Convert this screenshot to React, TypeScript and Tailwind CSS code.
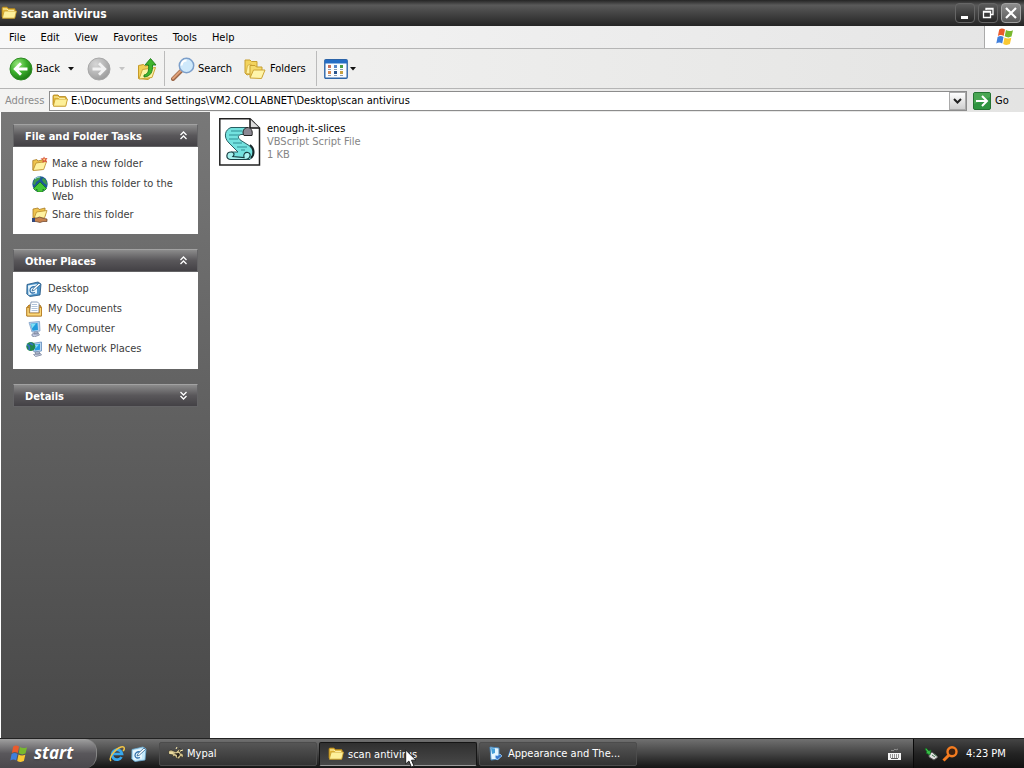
import React from 'react';

type IconProps = { className?: string };

function FolderIcon({ className = 'h-4 w-4' }: IconProps) {
  return (
    <svg viewBox="0 0 16 16" className={className} aria-hidden="true">
      <path d="M1 12V3.200C1 2.500 1.400 2 2 2h4l1.400 1.600h5.800c.6 0 1 .4 1 1V6H15L13.500 13H2Z" fill="#e3b93c" stroke="#a97c14" strokeWidth=".8" />
      <path d="M1.300 13.200 3.200 6h12.300l-1.800 7.200Z" fill="#fdf09a" stroke="#c79a26" strokeWidth=".8" />
      <path d="M2 4h4l1.200 1.400h6" stroke="#fff3b0" fill="none" />
    </svg>
  );
}

function FlagIcon({ className = 'h-5 w-5' }: IconProps) {
  return (
    <svg viewBox="0 0 20 20" className={className} aria-hidden="true">
      <path d="M4.200 2.400C6.300 1 8 1.200 10 2.500L8.700 9C6.700 7.700 5 7.700 2.900 8.900Z" fill="#ea5b2c" />
      <path d="M11 3c2 1.300 4.200 1.400 7 .2L16.500 9.600c-2.300 1.200-4.600 1-6.800-.3Z" fill="#78b82f" />
      <path d="M2.600 10C4.700 8.800 6.500 8.800 8.500 10L7.200 16.500C5.200 15.200 3.500 15.200 1.300 16.400Z" fill="#3f7fdc" />
      <path d="M9.500 10.500c2 1.200 4.300 1.300 6.800.3l-1.400 6.300c-2.300 1.200-4.600 1-6.700-.2Z" fill="#fac832" />
    </svg>
  );
}

function RoundArrow({ back, className = 'h-6 w-6' }: IconProps & { back?: boolean }) {
  const id = back ? 'arrowGreen' : 'arrowGrey';
  return (
    <svg viewBox="0 0 24 24" className={className} aria-hidden="true">
      <defs>
        <radialGradient id={id} cx=".35" cy=".28" r=".8">
          <stop offset="0" stopColor={back ? '#98e67c' : '#d6d6d6'} />
          <stop offset=".5" stopColor={back ? '#3cb02c' : '#b8b8b8'} />
          <stop offset="1" stopColor={back ? '#167210' : '#989898'} />
        </radialGradient>
      </defs>
      <circle cx="12" cy="12" r="11" fill={`url(#${id})`} stroke={back ? '#2f8a24' : '#a8a8a8'} />
      <path
        d={back ? 'M18.500 12H7M12 6.200 6.200 12l5.800 5.800' : 'M5.500 12H17M12 6.200 17.800 12 12 17.800'}
        fill="none"
        stroke={back ? '#fff' : '#f2f2f2'}
        strokeWidth="2.800"
      />
    </svg>
  );
}

function UpFolderIcon() {
  return (
    <svg viewBox="0 0 20 24" className="h-6 w-5" aria-hidden="true">
      <path d="M1.500 21.500V8.500l5-1 1.500 1.500 6-1v12l-3 2.500Z" fill="#f2cf55" stroke="#c59a28" />
      <path d="m2 22 3.500-9.500 13-2L15 20.500Z" fill="#fdf3a4" stroke="#cda536" />
      <path d="M7 18c4.500-1 5-5 4.500-10H8l5.500-6.500L19 8h-3.500c.5 7-2 11.500-8.500 12Z" fill="#3fb52e" stroke="#1d7a18" strokeWidth=".9" />
    </svg>
  );
}

function SearchIcon() {
  return (
    <svg viewBox="0 0 24 24" className="h-6 w-6" aria-hidden="true">
      <path d="m2 22 8-8" stroke="#9a6648" strokeWidth="4" strokeLinecap="round" />
      <path d="m2 21.500 8-8" stroke="#e0a078" strokeWidth="2" strokeLinecap="round" />
      <circle cx="15.500" cy="8.500" r="7.200" fill="#cfe9fb" stroke="#7c9fca" strokeWidth="1.500" />
      <path d="M10.500 8.500c.3-3 2.300-5 5-5" stroke="#fff" strokeWidth="2" fill="none" />
    </svg>
  );
}

function FoldersIcon() {
  return (
    <svg viewBox="0 0 22 22" className="h-[22px] w-[22px]" aria-hidden="true">
      <path d="M1 2h5l1.500 1.500H13V14L3 17 1 15Z" fill="#f3d35d" stroke="#c79f30" />
      <path d="m2 15.500 1.500-8L7 6v10Z" fill="#fff2a2" stroke="#d2ac42" strokeWidth=".8" />
      <path d="M6 19V7.500h5L12.500 9H18v10Z" fill="#f5da6c" stroke="#c79f30" />
      <path d="m6 20 3.500-8H21l-3.500 8.500Z" fill="#fff5aa" stroke="#cda536" />
    </svg>
  );
}

function ViewsIcon() {
  const colors = ['#c86f5b', '#5886c8', '#4b9c43', '#d78953', '#28548d', '#c7a141'];
  return (
    <svg viewBox="0 0 24 20" className="h-5 w-6" aria-hidden="true">
      <rect x=".8" y=".8" width="22.400" height="18.400" rx="1" fill="#fbfdff" stroke="#2c64a8" strokeWidth="1.400" />
      <path d="M1 1h22v3.500H1Z" fill="#246cc4" />
      {colors.map((c, i) => (
        <g key={c}>
          <rect x={4 + (i % 3) * 6} y={i < 3 ? 6 : 12} width="3" height="3" fill={c} />
          <path d={`M${4 + (i % 3) * 6} ${i < 3 ? 10.5 : 16.5}h3`} stroke="#8b9cb2" />
        </g>
      ))}
    </svg>
  );
}

function GoIcon() {
  return (
    <svg viewBox="0 0 18 18" className="h-[18px] w-[18px]" aria-hidden="true">
      <rect x=".5" y=".5" width="17" height="17" rx="1.500" fill="#2f9440" stroke="#247332" />
      <path d="M1 1h16v4L1 12Z" fill="#5ab35f" opacity=".6" />
      <path d="M3 9h11M9 4l5 5-5 5" fill="none" stroke="#fff" strokeWidth="2" />
    </svg>
  );
}

function NewFolderIcon() {
  return (
    <svg viewBox="0 0 16 16" className="h-4 w-4" aria-hidden="true">
      <path d="M.8 14V4.500l4-1 1 1.500L12 3.500v7l-2 3Z" fill="#efc44e" stroke="#a87b25" strokeWidth=".8" />
      <path d="m1 14.500 3-7.500 10.500-1.500-2.800 8Z" fill="#fff2a0" stroke="#b98c28" strokeWidth=".8" />
      <path d="m12 .5 1 1.700 2.500-.2-1.300 2 1 2.500-2.500-1L10.500 7l.2-2.800L8.500 2.500l2.700-.2Z" fill="#d8553a" />
      <circle cx="12.200" cy="3.600" r="1" fill="#ffd27a" />
    </svg>
  );
}

function PublishIcon() {
  return (
    <svg viewBox="0 0 16 16" className="h-4 w-4" aria-hidden="true">
      <circle cx="8" cy="8" r="7.700" fill="#1c5798" />
      <path d="M2 4c2-3 5-4 7-3L7 4 4 6 3 9 1 8Zm9-2c3 1 4 4 4 7l-3-2-2-3Z" fill="#3f9b4a" />
      <path d="M3 3c2-2 4-2 5-2" stroke="#a7d9f4" fill="none" />
      <path d="m8 6 6.500 6.500-2 2L11 13v3H5v-3l-1.500 1.500-2-2Z" fill="#46c738" stroke="#167a1c" strokeWidth=".8" />
    </svg>
  );
}

function ShareIcon() {
  return (
    <svg viewBox="0 0 16 16" className="h-4 w-4" aria-hidden="true">
      <path d="M1 11V2l5-1 1 1.500L13 1v8l-3 2Z" fill="#efc44e" stroke="#a87b25" strokeWidth=".8" />
      <path d="m2 11.500 2.500-6.500L15 3.500l-2.500 7.500Z" fill="#fff2a0" stroke="#b98c28" strokeWidth=".8" />
      <path d="M2 11h3l2.500-1L12 11.500l3 .5v2.500h-4l-3 1-4-1H2Z" fill="#c7834e" stroke="#684126" strokeWidth=".7" />
      <path d="M0 11h3v4H0Z" fill="#32487e" />
    </svg>
  );
}

function DesktopIcon({ light }: { light?: boolean }) {
  return (
    <svg viewBox="0 0 16 16" className="h-4 w-4" aria-hidden="true">
      <path d="M1 3.500 12 1l3 2-1 11-10 1.500L.8 13Z" fill={light ? '#c5e9fa' : '#4c93c8'} stroke={light ? '#69a9d2' : '#1f527f'} strokeWidth=".8" />
      <path d="M2 4.500 11 3v9.500L2.500 14Z" fill="#e9f7fe" />
      <path d="M9.500 6C6 5 4 7 4 9.500s2.500 3 5 2" fill="none" stroke="#3373ae" strokeWidth="1.300" />
      <path d="m6 10 1-2.500L13 2l1.500 1.500L8.500 9Z" fill="#fff" stroke="#286291" strokeWidth=".8" />
    </svg>
  );
}

function DocumentsIcon() {
  return (
    <svg viewBox="0 0 16 16" className="h-4 w-4" aria-hidden="true">
      <path d="M.8 6.500 3 4h11l1.500 2.500V15H.8Z" fill="#d99c31" stroke="#9b6717" strokeWidth=".8" />
      <path d="M3.500 12 5 1h6.500L13 2.500V12H3.500Z" fill="#fff" stroke="#7289aa" strokeWidth=".8" />
      <path d="M6 3.500h5M5.500 5.500h6M5.500 7.500h6M5.500 9.500h6" stroke="#9cb4d2" strokeWidth=".8" />
      <path d="M.8 6.500h2.500V12h10V6.500h2.200V15H.8Z" fill="#fad77b" stroke="#b57b21" strokeWidth=".8" />
    </svg>
  );
}

function ComputerIcon() {
  return (
    <svg viewBox="0 0 16 16" className="h-4 w-4" aria-hidden="true">
      <path d="M3 1.500 13.500.5 14 10l-8 1Z" fill="#b8d3ee" stroke="#7f9fc6" strokeWidth=".8" />
      <path d="m4.500 2.700 7-.7.5 7-5.500.7Z" fill="#1f9bdc" />
      <path d="m5 3 5-.4-4 5Z" fill="#7fe0f4" />
      <path d="M8 11h4v2H8Zm-2 2 6-1 1.500 2-5 1.800L6 15Z" fill="#c5cce4" stroke="#7d889e" strokeWidth=".8" />
    </svg>
  );
}

function NetworkIcon() {
  return (
    <svg viewBox="0 0 16 16" className="h-4 w-4" aria-hidden="true">
      <path d="M6 2.500 15.500 1v9l-7.500 1Z" fill="#bad6f0" stroke="#628cbb" strokeWidth=".8" />
      <path d="m7.500 3.800 6.500-1v6l-5 .8Z" fill="#269ce2" />
      <path d="m9 4 4-.6-3.500 4Z" fill="#84dcf5" />
      <circle cx="4.800" cy="5.500" r="4.500" fill="#21884c" />
      <path d="M1 4c2 0 3 2 2 5M4 2l3 2" stroke="#3271bd" strokeWidth="1.800" fill="none" />
      <path d="M9.500 11h4v2h-4Zm-2 2.500 7-1 1 1.500-6 1.500Z" fill="#cdd4e7" stroke="#7d889e" strokeWidth=".8" />
    </svg>
  );
}

function ScriptFileIcon() {
  return (
    <svg viewBox="0 0 42 48" className="h-12 w-[42px] shrink-0" aria-hidden="true">
      <path d="M.8.800H31L40.500 10v37H.8Z" fill="#fff" stroke="#222" strokeWidth="1.500" />
      <path d="M31 1v9h9.500" fill="#ddd" stroke="#111" strokeWidth="1.500" />
      <path d="M12 9.500h16c-4 3-4 5-3 7h-3c-4 1-3 4 0 6l8 5c5 4 6 9 1 14H12V34h7l-9-9c-6-6-4-13.500 2-15.500Z" fill="#74e2df" stroke="#285e62" />
      <path d="M28 9.500c-4 1-5 5-3 8h8c1-5-1-8-5-8Z" fill="#8b8792" stroke="#222" />
      <path d="M12 34c-5 0-6 7.500 0 7.500h14c5 0 7-6 3-7-3-1-5 2-4 5l-11-1c2-2 1-4.500-2-4.500Z" fill="#a8f2ef" stroke="#173e42" strokeWidth="1.200" />
      <path d="M31 27c4 3 5 9 1 13" fill="none" stroke="#15282a" strokeWidth="2" />
      <path d="M12 13h11M10 17h10M10 21h9M14 25h9M18 29h10M22 32h4" stroke="#2f8e94" />
    </svg>
  );
}

function IeIcon() {
  return (
    <svg viewBox="0 0 16 16" className="h-4 w-4" aria-hidden="true">
      <path d="M12.500 11A5 5 0 1 1 13 8H4" fill="none" stroke="#38a9ee" strokeWidth="2.700" />
      <path d="M2 15C-1 12 6 3 12 1c4-1 4 2 2 4" fill="none" stroke="#f2c445" strokeWidth="1.500" />
    </svg>
  );
}

function MypalIcon() {
  return (
    <svg viewBox="0 0 16 16" className="h-4 w-4" aria-hidden="true">
      <path d="M.5 5 3 4l2.500 1L8 6l4-4-1 3.500 3-.5-2 2c4 .5 4 3 2 5l-1-2-2 3-3-1-1-2-3 1 1-2-4-1Z" fill="#d2c28c" stroke="#1c1a15" strokeWidth=".5" />
      <path d="m6 7.500 5-.5 1 2-3 3v-3Z" fill="#29251c" />
      <path d="M1 7h4M8 3l1-2M12 5l3-1" stroke="#fff1b1" />
    </svg>
  );
}

function AppearanceIcon() {
  return (
    <svg viewBox="0 0 16 16" className="h-4 w-4" aria-hidden="true">
      <path d="m2 1 9 1v11l-8 1Z" fill="#e5f6ff" stroke="#4887bd" />
      <path d="m3 2 4 .5V7l-3 1Z" fill="#459fd9" />
      <path d="m7 11 2 3 5-4-2-2-3 2-1-1Z" fill="#3878cc" stroke="#a6d7ff" strokeWidth=".7" />
    </svg>
  );
}

function Chevrons({ down }: { down?: boolean }) {
  return (
    <svg viewBox="0 0 9 9" className="h-[9px] w-[9px]" aria-hidden="true">
      <path d={down ? 'm1.500 1 3 3 3-3m-6 4 3 3 3-3' : 'm1.500 4 3-3 3 3m-6 4 3-3 3 3'} fill="none" stroke="#fff" strokeWidth="1.300" />
    </svg>
  );
}

function Caret({ faded }: { faded?: boolean }) {
  return (
    <svg viewBox="0 0 6 4" className="h-1 w-1.5" aria-hidden="true">
      <path d="M0 0h6L3 3.500Z" fill={faded ? '#c4c4c4' : '#111'} />
    </svg>
  );
}

function CaptionButton({ label, bright, children }: { label: string; bright?: boolean; children: React.ReactNode }) {
  return (
    <button
      aria-label={label}
      className={
        bright
          ? 'flex h-5 w-5 items-center justify-center rounded-sm border border-[#a0a0a0] bg-linear-to-b from-[#8d8d8d] to-[#5a5a5a]'
          : 'flex h-5 w-5 items-center justify-center rounded-sm border border-[#666] bg-linear-to-b from-[#5c5c5c] to-[#252525]'
      }
    >
      <svg viewBox="0 0 16 16" className="h-4 w-4 shrink-0" fill="none" stroke="#fff" aria-hidden="true">
        {children}
      </svg>
    </button>
  );
}

function Panel({ title, closed, children }: { title: string; closed?: boolean; children?: React.ReactNode }) {
  return (
    <section>
      <button
        aria-expanded={!closed}
        className="flex h-[23px] w-full items-center justify-between border border-[#646466] border-t-[#a2a2a2] bg-linear-to-b from-[#8c8c8c] via-[#59575a] to-[#434145] pr-[9px] pl-[11px] text-[11px] font-bold text-white"
      >
        <span className="pt-1">{title}</span>
        <Chevrons down={closed} />
      </button>
      {children}
    </section>
  );
}

function TaskLink({ icon, text, wide }: { icon: React.ReactNode; text: string; wide?: boolean }) {
  return (
    <a href="#" className={wide ? 'flex items-start gap-1.5' : 'flex items-start gap-1'}>
      <span className="shrink-0">{icon}</span>
      <span className="pt-px leading-[13px]">{text}</span>
    </a>
  );
}

const places = [
  { text: 'Desktop', icon: <DesktopIcon /> },
  { text: 'My Documents', icon: <DocumentsIcon /> },
  { text: 'My Computer', icon: <ComputerIcon /> },
  { text: 'My Network Places', icon: <NetworkIcon /> },
];

export default function App() {
  return (
    <div className="flex h-screen flex-col overflow-hidden bg-white font-['DejaVu_Sans_Condensed',sans-serif] text-[11px] text-black">
      <header className="flex h-[26px] shrink-0 items-center bg-linear-to-b from-[#252525] via-[#5a5a5a] via-20% to-[#252525] pr-[3px] pl-px">
        <FolderIcon />
        <h1 className="ml-1 flex-1 pt-px text-xs font-bold text-white">scan antivirus</h1>
        <div className="flex gap-[3px]">
          <CaptionButton label="Minimize">
            <path d="M4 12.500h7" strokeWidth="3" />
          </CaptionButton>
          <CaptionButton label="Restore">
            <path d="M3.500 6.500h7v6h-7Zm0 .5h7M6 5V3.500h7v6h-2M6 4h7" strokeWidth="1.300" />
          </CaptionButton>
          <CaptionButton label="Close" bright>
            <path d="m3 3 10 10M13 3 3 13" strokeWidth="2.200" />
          </CaptionButton>
        </div>
      </header>

      <nav className="flex h-[23px] shrink-0 border-b border-[#b5b5b5] bg-linear-to-r from-[#f8f8f8] to-[#e5e5e5]">
        <div className="flex flex-1 items-center gap-[15px] pt-0.5 pl-[9px]">
          {['File', 'Edit', 'View', 'Favorites', 'Tools', 'Help'].map((m) => (
            <button key={m}>{m}</button>
          ))}
        </div>
        <div className="flex w-10 items-center justify-center border-l border-[#aaa] bg-white">
          <FlagIcon />
        </div>
      </nav>

      <div className="flex h-10 shrink-0 items-center border-b border-[#b5b5b5] bg-linear-to-r from-[#f5f5f4] to-[#e4e4e3] pl-[9px]">
        <button className="flex w-[51px] items-center gap-[3px]">
          <RoundArrow back />
          <span className="pt-0.5">Back</span>
        </button>
        <button aria-label="Back history" className="ml-2"><Caret /></button>
        <button aria-label="Forward" className="ml-[13px]"><RoundArrow /></button>
        <button aria-label="Forward history" className="ml-2"><Caret faded /></button>
        <button aria-label="Up" className="ml-3"><UpFolderIcon /></button>
        <div className="ml-[7px] h-[35px] w-px bg-[#bbb]" />
        <button className="ml-1.5 flex w-[61px] items-center gap-[3px]">
          <SearchIcon />
          <span className="pt-0.5">Search</span>
        </button>
        <button className="ml-3 flex w-[62px] items-center gap-1">
          <FoldersIcon />
          <span className="pt-0.5">Folders</span>
        </button>
        <div className="ml-2.5 h-[35px] w-px bg-[#bbb]" />
        <button aria-label="Views" className="ml-[7px] flex items-center gap-0.5">
          <ViewsIcon />
          <Caret />
        </button>
      </div>

      <div className="flex h-[23px] shrink-0 items-center bg-linear-to-r from-[#f3f3f2] to-[#e4e4e3] pl-[5px]">
        <label htmlFor="address" className="w-11 pt-0.5 text-[#8b8b8b]">Address</label>
        <div className="flex h-5 flex-1 items-center border border-[#8c8c8c] bg-white pl-0.5">
          <FolderIcon />
          <input
            id="address"
            className="ml-[3px] min-w-0 flex-1 bg-transparent pt-0.5 outline-none"
            defaultValue="E:\Documents and Settings\VM2.COLLABNET\Desktop\scan antivirus"
          />
          <button aria-label="Show addresses" className="flex h-[18px] w-[17px] items-center justify-center border border-[#aaa] bg-linear-to-b from-white to-[#cfcfcf]">
            <svg viewBox="0 0 9 6" className="h-1.5 w-[9px]" aria-hidden="true">
              <path d="m1 1 3.500 3.500L8 1" fill="none" stroke="#222" strokeWidth="2" />
            </svg>
          </button>
        </div>
        <button className="ml-1.5 flex w-[51px] items-center gap-1">
          <GoIcon />
          <span className="pt-0.5">Go</span>
        </button>
      </div>

      <main className="flex min-h-0 flex-1">
        <aside className="ml-px flex w-[209px] shrink-0 flex-col gap-[15px] bg-linear-to-b from-[#787878] to-[#484848] px-3 pt-3 text-[#404040]">
          <Panel title="File and Folder Tasks">
            <div className="flex flex-col gap-1 bg-white pt-[9px] pr-4 pb-[11px] pl-[19px]">
              <TaskLink icon={<NewFolderIcon />} text="Make a new folder" />
              <TaskLink icon={<PublishIcon />} text="Publish this folder to the Web" />
              <TaskLink icon={<ShareIcon />} text="Share this folder" />
            </div>
          </Panel>
          <Panel title="Other Places">
            <div className="flex flex-col gap-1 bg-white pt-[9px] pr-3 pb-3 pl-[13px]">
              {places.map((p) => (
                <TaskLink key={p.text} icon={p.icon} text={p.text} wide />
              ))}
            </div>
          </Panel>
          <Panel title="Details" closed />
        </aside>
        <section className="flex-1 bg-white pt-1.5 pl-[9px]">
          <div className="flex gap-1.5">
            <ScriptFileIcon />
            <div className="pt-1 leading-[13px] text-[#858585]">
              <p className="text-black">enough-it-slices</p>
              <p>VBScript Script File</p>
              <p>1 KB</p>
            </div>
          </div>
        </section>
      </main>

      <footer className="flex h-[30px] shrink-0 items-stretch border-t border-[#222] bg-linear-to-b from-[#717171] via-[#444] via-50% to-[#151515] text-white">
        <button className="flex w-[97px] items-center gap-[5px] rounded-r-xl border-r border-[#858585] bg-linear-to-b from-[#a0a0a0] via-[#59575b] to-[#4a484c] pl-[9px] font-['Open_Sans',sans-serif] text-[17px] font-bold italic">
          <FlagIcon />
          <span className="pb-0.5 text-shadow-sm">start</span>
        </button>
        <div className="flex items-center gap-1.5 px-3">
          <button aria-label="Internet Explorer"><IeIcon /></button>
          <button aria-label="Show Desktop"><DesktopIcon light /></button>
        </div>
        <div className="flex min-w-0 flex-1 items-center gap-0.5">
          <button className="flex h-6 w-[158px] items-center gap-[3px] rounded-xs border border-[#4c4c4c] bg-linear-to-b from-[#565656] to-[#333] pl-2">
            <MypalIcon />
            <span className="pt-0.5">Mypal</span>
          </button>
          <button className="relative flex h-6 w-[158px] items-center gap-1 rounded-xs border border-[#151515] border-b-[#999] bg-linear-to-b from-[#303030] to-[#484848] pt-px pl-2">
            <FolderIcon />
            <span className="pt-0.5">scan antivirus</span>
            <svg viewBox="0 0 12 20" className="absolute top-1.5 left-[85px] h-5 w-3" aria-hidden="true">
              <path d="M.7 1v14l3.200-3 2.400 6 2.700-1-2.500-5.800H11Z" fill="#fff" stroke="#222" />
            </svg>
          </button>
          <button className="flex h-6 w-[158px] items-center gap-1 rounded-xs border border-[#4c4c4c] bg-linear-to-b from-[#565656] to-[#333] pl-2">
            <AppearanceIcon />
            <span className="pt-0.5">Appearance and The...</span>
          </button>
        </div>
        <button aria-label="Keyboard" className="mr-3 flex items-center">
          <svg viewBox="0 0 13 12" className="h-3 w-[13px]" aria-hidden="true">
            <path d="M3 3c1-2 2 1 3-1s2 1 4-1" fill="none" stroke="#aaa" strokeWidth=".8" />
            <path d="M0 5h13v7H0Z" fill="#f5f5f5" />
            <path d="M2 7h9.500M2 9h9.500" stroke="#333" strokeDasharray="1 1" />
            <path d="M3 10.500h7" stroke="#333" strokeWidth=".8" />
          </svg>
        </button>
        <div className="flex w-[111px] items-center border-l border-[#090909] bg-linear-to-b from-[#454545] via-[#242424] to-[#111] pl-2.5">
          <svg viewBox="0 0 16 16" className="h-4 w-4" aria-hidden="true">
            <path d="m5 8 3-2 6 5-4 3-5-3Z" fill="#dedede" stroke="#555" />
            <path d="m8 9 3 2M10 8l3 2" stroke="#487a55" />
            <path d="m2 2 3 3 2-1-1 5-4-2 1-1-2-3Z" fill="#38bd47" stroke="#126c21" strokeWidth=".7" />
          </svg>
          <svg viewBox="0 0 16 16" className="ml-0.5 h-4 w-4" aria-hidden="true">
            <circle cx="10" cy="5.800" r="4.500" fill="#3c2212" stroke="#f47c20" strokeWidth="2.400" />
            <path d="m6.500 9.500-5 5" stroke="#f47c20" strokeWidth="3" />
          </svg>
          <time className="ml-2 pt-px">4:23 PM</time>
        </div>
      </footer>
    </div>
  );
}
